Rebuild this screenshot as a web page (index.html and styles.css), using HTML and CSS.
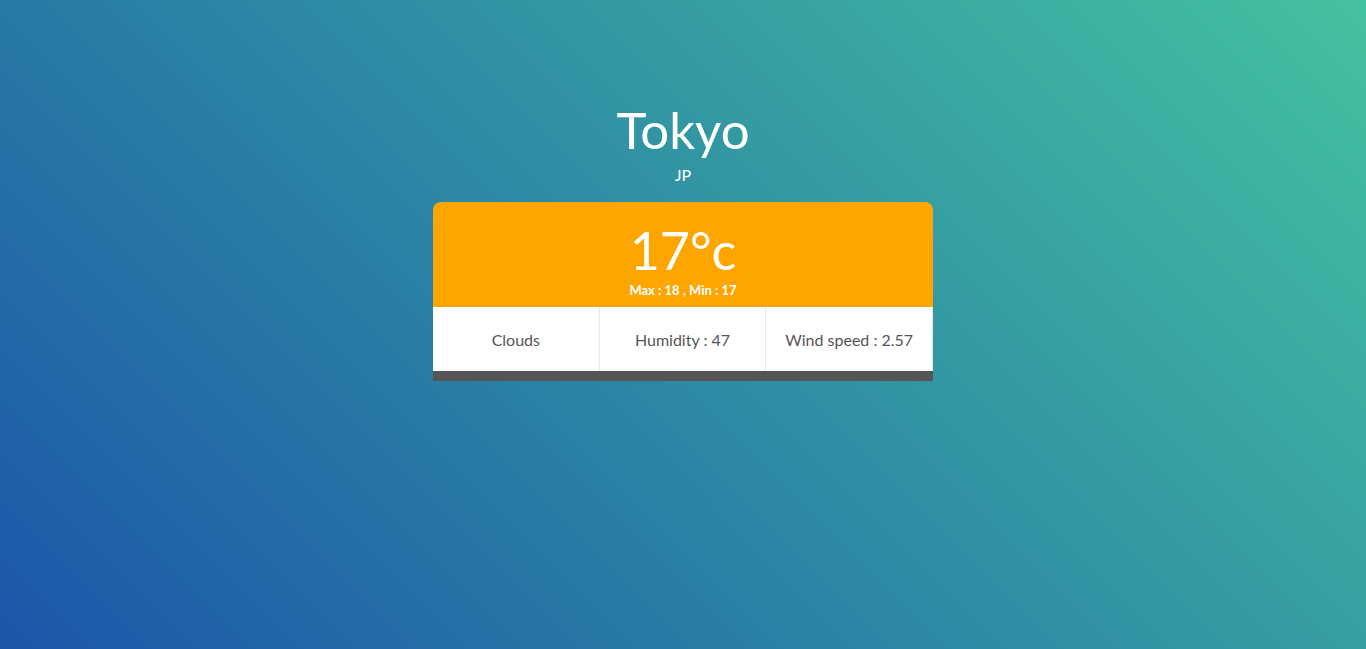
FILE: index.html
```html
<!DOCTYPE html>
<html lang="en">
<head>
<meta charset="utf-8">
<title>Weather</title>
<link rel="stylesheet" href="styles.css">
</head>
<body>
<main class="app">
  <header class="place">
    <h1 class="city">Tokyo</h1>
    <div class="country">JP</div>
  </header>
  <section class="card">
    <div class="temp-box">
      <div class="temp">17°c</div>
      <div class="range">Max : 18 , Min : 17</div>
    </div>
    <div class="details">
      <div class="cell">Clouds</div>
      <div class="cell">Humidity : 47</div>
      <div class="cell">Wind speed : 2.57</div>
    </div>
    <div class="footer-bar"></div>
  </section>
</main>
</body>
</html>
```
FILE: styles.css
```css
html, body {
  margin: 0;
  padding: 0;
  height: 100%;
}
body {
  background: linear-gradient(45deg, #1b56a9 0%, #43c29f 100%);
  font-family: "Lato", "Liberation Sans", sans-serif;
  color: #fff;
}
.app {
  display: flex;
  flex-direction: column;
  align-items: center;
  padding-top: 98px;
}
.place {
  text-align: center;
}
.city {
  margin: 0;
  font-size: 51px;
  font-weight: 400;
  line-height: 64px;
}
.country {
  font-size: 16px;
  line-height: 18px;
  margin-top: 4px;
}
.card {
  width: 500px;
  margin-top: 18px;
  border-radius: 8px 8px 0 0;
  overflow: hidden;
}
.temp-box {
  background: #ffa500;
  text-align: center;
  padding: 18px 0 10px;
  height: 77px;
}
.temp {
  font-size: 52px;
  line-height: 60px;
}
.range {
  font-size: 13px;
  font-weight: 700;
  line-height: 16px;
  margin-top: 2px;
}
.details {
  display: grid;
  grid-template-columns: repeat(3, 1fr);
  background: #fff;
}
.cell {
  height: 64px;
  display: flex;
  align-items: center;
  justify-content: center;
  color: #555;
  font-size: 16px;
  border-right: 1px solid #e6e6e6;
}
.footer-bar {
  height: 10px;
  background: #555;
}
```
